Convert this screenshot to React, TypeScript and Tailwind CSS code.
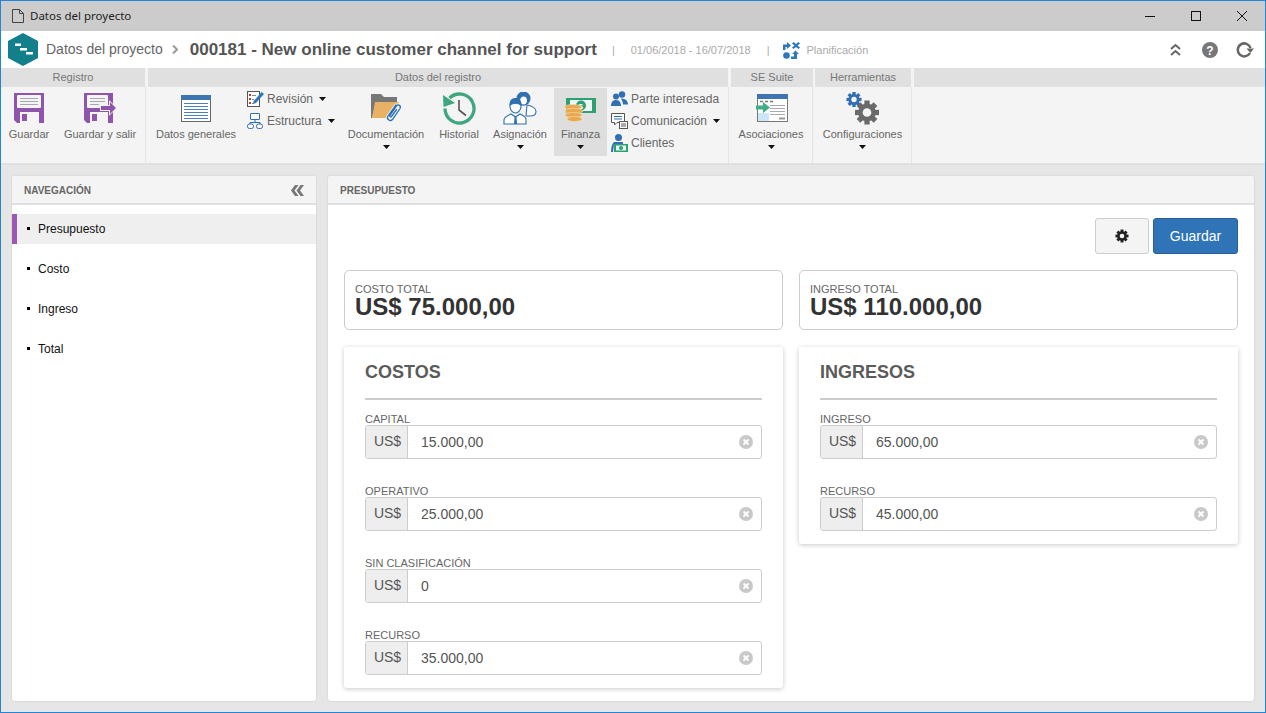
import React from "react";

const Caret = ({ className = "" }: { className?: string }) => (
  <svg width="7" height="4" viewBox="0 0 7 4" className={className}><path d="M0 0h7L3.5 4z" fill="#111" /></svg>
);

const SaveIcon = () => (
  <svg width="30" height="30" viewBox="0 0 30 30">
    <path d="M0 0h30v30H3l-3-3z" fill="#8e55aa" />
    <rect x="3" y="2" width="24" height="13" rx="1" fill="#f4f4f4" />
    <path d="M6 5.500h18M6 8.500h18M6 11.500h18" stroke="#a9a9a9" strokeWidth="1" />
    <rect x="6" y="19" width="19" height="11" fill="#f4f4f4" />
    <rect x="8" y="21" width="5" height="7" fill="#8e55aa" />
  </svg>
);
const SaveExitIcon = () => (
  <svg width="33" height="30" viewBox="0 0 33 30">
    <path d="M0 0h29v30H3l-3-3z" fill="#8e55aa" />
    <rect x="3" y="2" width="21" height="13" rx="1" fill="#f4f4f4" />
    <path d="M6 5.500h15M6 8.500h15M6 11.500h9" stroke="#a9a9a9" strokeWidth="1" />
    <rect x="6" y="19" width="18" height="11" fill="#f4f4f4" />
    <rect x="8" y="21" width="5" height="7" fill="#8e55aa" />
    <path d="M16 12h9V7l8 8-8 8v-5h-9z" fill="#f4f4f4" />
    <path d="M17 13h9V9l6 6-6 6v-4h-9z" fill="#8e55aa" />
  </svg>
);
const WindowIcon = () => (
  <svg width="30" height="27" viewBox="0 0 30 27">
    <rect x="0.500" y="0.500" width="29" height="26" fill="#fff" stroke="#666" />
    <rect x="0" y="0" width="30" height="5" fill="#3d75b0" />
    <path d="M3 8.500h24M3 11.500h24M3 14.500h24M3 17.500h24M3 20.500h24M3 23.500h24" stroke="#4a7fb8" strokeWidth="1" />
  </svg>
);
const ReviewIcon = () => (
  <svg width="17" height="16" viewBox="0 0 17 16">
    <rect x="0.500" y="0.500" width="12" height="15" fill="#fff" stroke="#555" />
    <path d="M2 3h2v2H2zM2 7h2v2H2zM2 11h2v2H2z" fill="#c0392b" />
    <path d="M5 4.500h4M5 8.500h2M5 12.500h2" stroke="#888" />
    <path d="M14.500 1l2.500 2-8 9-3 1 .7-3z" fill="#2f77bd" />
  </svg>
);
const TreeIcon = () => (
  <svg width="16" height="16" viewBox="0 0 16 16" fill="#fff" stroke="#2f6fb2">
    <rect x="3.500" y="0.500" width="9" height="6" rx="0.500" />
    <path d="M8 6.500v3M3 11V9.500h10V11" fill="none" />
    <rect x="0.500" y="11" width="6" height="4.500" rx="2" />
    <rect x="9.500" y="11" width="6" height="4.500" rx="2" />
  </svg>
);
const FolderIcon = () => (
  <svg width="31" height="30" viewBox="0 0 31 30">
    <path d="M0 1h10l3 3h13v6H5L1 25H0z" fill="#777" />
    <path d="M4 9h24l-6 16H1z" fill="#e9b163" />
    <path d="M25 12l-8 11c-2 3 2 6 4.500 3.500l7.500-11c1.500-2.500-2-5-3.500-2.500l-6.500 9.500c-.7 1 .7 2 1.500 1l5-7" fill="none" stroke="#f4f4f4" strokeWidth="3" strokeLinecap="round" />
    <path d="M25 12l-8 11c-2 3 2 6 4.500 3.500l7.500-11c1.500-2.500-2-5-3.500-2.500l-6.500 9.500c-.7 1 .7 2 1.500 1l5-7" fill="none" stroke="#2a70b5" strokeWidth="1.300" strokeLinecap="round" />
  </svg>
);
const ClockIcon = () => (
  <svg width="33" height="33" viewBox="0 0 33 33">
    <path d="M6.500 6A14.500 14.500 0 1 1 2 16.500" fill="none" stroke="#3fa680" strokeWidth="3.300" />
    <path d="M0 3l12 8-11.500 4z" fill="#3fa680" />
    <path d="M16 8v10l7 5.500" fill="none" stroke="#555" strokeWidth="1.600" />
  </svg>
);
const PeopleIcon = () => (
  <svg width="34" height="33" viewBox="0 0 34 33" fill="#fff" stroke="#2f6fb2" strokeWidth="1.100">
    <path d="M24 13c4 .5 9 3 9 6.500s-3 4.500-6 4.500h-4z" />
    <ellipse cx="20.500" cy="6.500" rx="6.500" ry="6.500" fill="#2f6fb2" />
    <ellipse cx="20.500" cy="8.500" rx="4" ry="4.500" />
    <path d="M1 32v-4c0-3 3-4 7-6l4.500 3 4.500-3c4 2 6 3 6 6v4z" />
    <ellipse cx="12.500" cy="14" rx="5.500" ry="7" />
    <path d="M7 13c0-5 3-6.500 5.500-6.500S18 8 18 13c-3-2-8-2-11 0z" fill="#2f6fb2" />
    <path d="M11.500 25h2l.5 7h-3z" fill="#2f6fb2" stroke="none" />
  </svg>
);
const MoneyIcon = () => (
  <svg width="33" height="26" viewBox="0 0 33 26">
    <rect x="2" y="1" width="30" height="15" fill="#2fa073" />
    <rect x="6" y="3" width="22" height="11" fill="#eef7f3" />
    <circle cx="17" cy="8.500" r="5" fill="#2fa073" />
    <text x="14.500" y="11.500" fontSize="8" fill="#fff" fontFamily="Liberation Sans, sans-serif" fontWeight="700">$</text>
    <ellipse cx="9" cy="10" rx="8.500" ry="2.500" fill="#e9a94f" stroke="#f8dcae" strokeWidth="0.600" />
    <ellipse cx="10" cy="14" rx="9" ry="2.500" fill="#e9a94f" stroke="#f8dcae" strokeWidth="0.600" />
    <ellipse cx="9.500" cy="18" rx="8.500" ry="2.500" fill="#e9a94f" stroke="#f8dcae" strokeWidth="0.600" />
    <ellipse cx="10.500" cy="22" rx="7.500" ry="2.500" fill="#e9a94f" stroke="#f8dcae" strokeWidth="0.600" />
  </svg>
);
const GroupIcon = () => (
  <svg width="17" height="16" viewBox="0 0 17 16" fill="#2f6fb2">
    <circle cx="5" cy="5.500" r="3" />
    <circle cx="11" cy="3.500" r="3.200" />
    <path d="M0 15c0-4 2-6 5-6s5 2 5 6z" />
    <path d="M10 7.500c4 0 7 2 7 6h-5c0-2-1-4-2-6z" />
  </svg>
);
const CommIcon = () => (
  <svg width="17" height="16" viewBox="0 0 17 16">
    <path d="M.5.500h13v9H6L3.500 12V9.500h-3z" fill="#fff" stroke="#555" />
    <path d="M3 3.500h8M3 6h8" stroke="#2f6fb2" />
    <rect x="8.500" y="8.500" width="8" height="7" fill="#fff" stroke="#555" />
    <path d="M10 11h5M10 13h5" stroke="#555" />
  </svg>
);
const ClientIcon = () => (
  <svg width="17" height="18" viewBox="0 0 17 18">
    <circle cx="7.500" cy="3.500" r="3.500" fill="#2f6fb2" />
    <path d="M3 8h9v2H3L2 18H0c0-5 1-8 3-10z" fill="#2f6fb2" />
    <rect x="3" y="10" width="14" height="8" fill="#2fa073" />
    <rect x="5" y="11.500" width="10" height="5" fill="#e8f4ef" />
    <circle cx="10" cy="14" r="2" fill="#2fa073" />
  </svg>
);
const AssocIcon = () => (
  <svg width="33" height="28" viewBox="0 0 33 28">
    <rect x="2.500" y="0.500" width="30" height="27" fill="#fff" stroke="#777" />
    <rect x="2" y="0" width="31" height="5" fill="#3d75b0" />
    <path d="M5 7.500h3M10 7.500h3M15 7.500h3" stroke="#777" strokeWidth="1.500" />
    <rect x="3" y="19" width="11" height="8" fill="#cbe6f5" />
    <path d="M15 11.500h15M15 14.500h15M15 17.500h15M15 20.500h15" stroke="#aaa" />
    <path d="M24 24.500h6" stroke="#999" strokeWidth="2" />
    <path d="M1 11.500h7V8l7 5.500-7 5.500v-3.500H1z" fill="#3fae84" />
  </svg>
);
const Cog = ({ cx, cy, r, fill, hole }: { cx: number; cy: number; r: number; fill: string; hole: string }) => (
  <g>
    {[0, 45, 90, 135].map((a) => (
      <rect key={a} x={cx - r * 0.22} y={cy - r} width={r * 0.44} height={r * 2} fill={fill} transform={`rotate(${a} ${cx} ${cy})`} />
    ))}
    <circle cx={cx} cy={cy} r={r * 0.74} fill={fill} />
    <circle cx={cx} cy={cy} r={r * 0.36} fill={hole} />
  </g>
);
const GearsIcon = () => (
  <svg width="34" height="33" viewBox="0 0 34 33">
    <Cog cx={8} cy={7.500} r={7.500} fill="#2f6fb2" hole="#f4f4f4" />
    <Cog cx={21} cy={20.500} r={12} fill="#6a6a6a" hole="#f4f4f4" />
  </svg>
);

const PlanIcon = () => (
  <svg width="17" height="17" viewBox="0 0 17 17" fill="#2f77bd">
    <path d="M0 2.500h4V0l4 3.500L4 7V5H2.500v3H0z" />
    <path d="M10.500 0l2.500 2 2.500-2L17 1.500l-2.500 2 2.500 2L15.500 7 13 5l-2.500 2L9 5.500l2.500-2L9 1.500z" />
    <circle cx="3.500" cy="13.500" r="3.300" />
    <path d="M8 14.500h3V12H9l3.500-3.500L16 12h-2v5H8z" />
  </svg>
);

const RibbonBtn = ({ w, label, icon, caret, active, top = "pt-[6px]", extra = "" }: { w: string; label: string; icon: React.ReactNode; caret?: boolean; active?: boolean; top?: string; extra?: string }) => (
  <div className={`${w} ${extra} flex flex-col items-center shrink-0 ${active ? "bg-[#dedede] h-[68px] mt-px" : ""}`}>
    <div className={`${active ? "h-[39px]" : "h-[40px]"} flex items-start justify-center ${top}`}>{icon}</div>
    <span className="text-[11px] leading-[14px] text-[#666] whitespace-nowrap">{label}</span>
    {caret && <Caret className="mt-[4px]" />}
  </div>
);

const SmallBtn = ({ icon, label, caret }: { icon: React.ReactNode; label: string; caret?: boolean }) => (
  <div className="h-[22px] flex items-center">
    <div className="w-[20px] flex justify-start">{icon}</div>
    <span className="text-[12px] text-[#666] whitespace-nowrap">{label}</span>
    {caret && <Caret className="ml-[6px]" />}
  </div>
);

const Field = ({ label, value, last }: { label: string; value: string; last?: boolean }) => (
  <div className={last ? "" : "mb-[26px]"}>
    <div className="text-[11px] leading-[12px] text-[#666] h-[12px]">{label}</div>
    <div className="flex h-[34px] border border-[#ccc] rounded-[3px] bg-white">
      <div className="w-[42px] shrink-0 bg-[#eee] border-r border-[#ccc] rounded-l-[3px] flex items-center justify-center text-[14px] text-[#555] pb-[2px] pl-[2px]">US$</div>
      <div className="flex-1 pl-[13px] flex items-center text-[14px] text-[#555]">{value}</div>
      <div className="pr-[8px] flex items-center">
        <svg width="14" height="14" viewBox="0 0 14 14">
          <circle cx="7" cy="7" r="7" fill="#c9c9c9" />
          <path d="M4.500 4.500l5 5M9.500 4.500l-5 5" stroke="#fff" strokeWidth="2" />
        </svg>
      </div>
    </div>
  </div>
);

const Section = ({ title, children }: { title: string; children: React.ReactNode }) => (
  <div className="bg-white rounded-[3px] shadow-[0_1px_5px_rgba(0,0,0,0.22)] px-[21px] pb-[13px] pt-[14px]">
    <div className="text-[18px] leading-[22px] font-bold text-[#5b5b5b] pb-[15px] border-b-2 border-[#ccc] mb-[13px]">{title}</div>
    {children}
  </div>
);

const Total = ({ label, value }: { label: string; value: string }) => (
  <div className="h-[60px] border border-[#ccc] rounded-[5px] bg-white px-[10px] pt-[12px]">
    <div className="text-[11px] leading-[12px] text-[#666]">{label}</div>
    <div className="text-[24px] leading-[24px] font-bold text-[#333]">{value}</div>
  </div>
);

const NavItem = ({ label, active }: { label: string; active?: boolean }) => (
  <div className={`h-[30px] mb-[10px] flex items-center text-[12px] text-[#111] ${active ? "bg-[#efefef] border-l-[5px] border-[#9b59b6] pl-[10px]" : "pl-[15px]"}`}>
    <span className="w-[3px] h-[3px] bg-black mr-[8px] mb-[2px]" />
    {label}
  </div>
);

const RibbonTab = ({ w, label }: { w: string; label: string }) => (
  <div className={`${w} shrink-0 bg-[#e0e0e0] h-[19px] flex items-center justify-center text-[11px] text-[#777]`}>{label}</div>
);

export default function App() {
  return (
    <div className="h-[713px] w-[1266px] overflow-hidden flex flex-col bg-[#e6e6e6] border border-[#1f86d9] font-['Liberation_Sans',Arial,sans-serif]">
      {/* title bar */}
      <div className="h-[30px] shrink-0 bg-[#cccccc] flex items-center">
        <svg width="12" height="14" viewBox="0 0 12 14" className="ml-[11px] mr-[6px]" fill="none" stroke="#444">
          <path d="M.5.500h7l4 4v9H.5zM7.500.500v4h4" />
        </svg>
        <span className="text-[11.5px] text-[#222] font-['Noto_Sans',sans-serif]">Datos del proyecto</span>
        <div className="ml-auto flex items-center h-full">
          <div className="w-[46px] flex justify-center"><svg width="10" height="10" viewBox="0 0 10 10"><path d="M0 5.500h10" stroke="#111" /></svg></div>
          <div className="w-[46px] flex justify-center"><svg width="10" height="10" viewBox="0 0 10 10"><rect x=".5" y=".5" width="9" height="9" fill="none" stroke="#111" /></svg></div>
          <div className="w-[46px] flex justify-center"><svg width="10" height="10" viewBox="0 0 10 10"><path d="M0 0l10 10M10 0L0 10" stroke="#111" /></svg></div>
        </div>
      </div>
      {/* header */}
      <div className="h-[37px] shrink-0 bg-white flex items-center">
        <svg width="30" height="33" viewBox="0 0 30 33" className="ml-[7px]">
          <path d="M15 0l15 8v17l-15 8-15-8V8z" fill="#137f8b" />
          <path d="M7 10.500h6v2.500H7zM12 15h7v2.500h-7zM18 19h7v2.500h-7z" fill="#fff" />
        </svg>
        <span className="ml-[8px] text-[14px] text-[#666]">Datos del proyecto</span>
        <svg width="6" height="9" viewBox="0 0 6 9" className="ml-[9px]" fill="none" stroke="#999" strokeWidth="2"><path d="M1 0.500l4 4-4 4" /></svg>
        <span className="ml-[12px] text-[17px] font-bold text-[#555]">000181 - New online customer channel for support</span>
        <span className="ml-[15px] pt-[2px] text-[11px] text-[#aaa]">|</span>
        <span className="ml-[16px] pt-[2px] text-[11px] text-[#aaa]">01/06/2018 - 16/07/2018</span>
        <span className="ml-[16px] pt-[2px] text-[11px] text-[#aaa]">|</span>
        <span className="ml-[13px] pt-[2px]"><PlanIcon /></span>
        <span className="ml-[7px] pt-[2px] text-[11px] text-[#aaa]">Planificación</span>
        <div className="ml-auto flex items-center pr-[11px]">
          <svg width="11" height="13" viewBox="0 0 11 13" fill="none" stroke="#666" strokeWidth="2"><path d="M1 6l4.500-4L10 6M1 12l4.500-4 4.500 4" /></svg>
          <svg width="16" height="16" viewBox="0 0 16 16" className="ml-[21px]"><circle cx="8" cy="8" r="8" fill="#777" /><text x="8" y="12.500" textAnchor="middle" fontSize="12" fontWeight="700" fill="#fff" fontFamily="Liberation Sans, sans-serif">?</text></svg>
          <svg width="18" height="16" viewBox="0 0 18 16" fill="none" stroke="#666" strokeWidth="2.500" className="ml-[18px]"><path d="M14 11a6.500 6.500 0 1 1 .5-5" /><path d="M10.500 6.500h7.500l-3.700 4.500z" fill="#666" stroke="none" /></svg>
        </div>
      </div>
      {/* ribbon tabs */}
      <div className="h-[19px] shrink-0 flex bg-[#f4f4f4]">
        <RibbonTab w="w-[144px]" label="Registro" />
        <div className="w-[3px]" />
        <RibbonTab w="w-[580px]" label="Datos del registro" />
        <div className="w-[3px]" />
        <RibbonTab w="w-[82px]" label="SE Suite" />
        <div className="w-[2px]" />
        <RibbonTab w="w-[96px]" label="Herramientas" />
        <div className="w-[3px]" />
        <div className="flex-1 bg-[#e0e0e0]" />
      </div>
      {/* ribbon body */}
      <div className="h-[78px] shrink-0 flex bg-[#f4f4f4] border-b-2 border-[#e0e0e0]">
        <div className="w-[145px] flex border-r border-[#e4e4e4]">
          <RibbonBtn w="w-[56px]" label="Guardar" icon={<SaveIcon />} />
          <RibbonBtn w="w-[86px]" label="Guardar y salir" icon={<SaveExitIcon />} />
        </div>
        <div className="w-[583px] flex border-r border-[#e4e4e4]">
          <RibbonBtn w="w-[100px]" label="Datos generales" icon={<WindowIcon />} top="pt-[8px]" />
          <div className="w-[92px] shrink-0 pt-[1px] pl-[1px]">
            <SmallBtn icon={<ReviewIcon />} label="Revisión" caret />
            <SmallBtn icon={<TreeIcon />} label="Estructura" caret />
          </div>
          <RibbonBtn w="w-[96px]" label="Documentación" icon={<FolderIcon />} caret />
          <RibbonBtn w="w-[50px]" label="Historial" icon={<ClockIcon />} top="pt-[5px]" />
          <RibbonBtn w="w-[70px]" extra="pl-[2px]" label="Asignación" icon={<PeopleIcon />} top="pt-[5px]" caret />
          <RibbonBtn w="w-[53px]" label="Finanza" icon={<MoneyIcon />} top="pt-[9px]" caret active />
          <div className="flex-1 pl-[4px] pt-[1px]">
            <SmallBtn icon={<GroupIcon />} label="Parte interesada" />
            <SmallBtn icon={<CommIcon />} label="Comunicación" caret />
            <SmallBtn icon={<ClientIcon />} label="Clientes" />
          </div>
        </div>
        <div className="w-[84px] flex border-r border-[#e4e4e4]">
          <RibbonBtn w="w-[83px]" extra="pl-[1px]" label="Asociaciones" icon={<AssocIcon />} top="pt-[7px]" caret />
        </div>
        <div className="w-[99px] flex border-r border-[#e4e4e4]">
          <RibbonBtn w="w-[98px]" extra="pl-[1px]" label="Configuraciones" icon={<GearsIcon />} top="pt-[5px]" caret />
        </div>
      </div>
      {/* main */}
      <div className="flex-1 min-h-0 flex gap-[12px] pl-[11px] pr-[11px] pt-[11px] pb-[11px]">
        <aside className="w-[304px] shrink-0 bg-white rounded-[3px] shadow-[0_0_2px_rgba(0,0,0,0.15)]">
          <div className="h-[29px] bg-[#f4f4f4] border-b-2 border-[#e0e0e0] rounded-t-[3px] flex items-center justify-between pl-[12px] pr-[12px] pt-[2px]">
            <span className="text-[10px] font-bold text-[#666]">NAVEGACIÓN</span>
            <svg width="13" height="11" viewBox="0 0 13 11" fill="#777"><path d="M4 0h3.500L3.500 5.500 7.500 11H4L0 5.500zM9.500 0H13L9 5.500l4 5.500H9.500l-4-5.500z" /></svg>
          </div>
          <div className="pt-[9px]">
            <NavItem label="Presupuesto" active />
            <NavItem label="Costo" />
            <NavItem label="Ingreso" />
            <NavItem label="Total" />
          </div>
        </aside>
        <main className="flex-1 min-w-0 bg-white rounded-[3px] shadow-[0_0_2px_rgba(0,0,0,0.15)]">
          <div className="h-[29px] bg-[#f4f4f4] border-b-2 border-[#e0e0e0] rounded-t-[3px] flex items-center pl-[12px] pt-[2px]">
            <span className="text-[10px] font-bold text-[#666]">PRESUPUESTO</span>
          </div>
          <div className="px-[16px] pt-[13px]">
            <div className="flex justify-end gap-[4px] mb-[16px]">
              <div className="w-[54px] h-[36px] bg-[#f4f4f4] border border-[#ccc] rounded-[3px] flex items-center justify-center">
                <svg width="14" height="14" viewBox="0 0 14 14"><Cog cx={7} cy={7} r={6.500} fill="#222" hole="#f4f4f4" /></svg>
              </div>
              <div className="w-[85px] h-[36px] bg-[#2e74b7] border border-[#285f94] rounded-[3px] flex items-center justify-center text-[14px] text-white">Guardar</div>
            </div>
            <div className="grid grid-cols-2 gap-x-[16px] gap-y-[17px] items-start">
              <Total label="COSTO TOTAL" value="US$ 75.000,00" />
              <Total label="INGRESO TOTAL" value="US$ 110.000,00" />
              <Section title="COSTOS">
                <Field label="CAPITAL" value="15.000,00" />
                <Field label="OPERATIVO" value="25.000,00" />
                <Field label="SIN CLASIFICACIÓN" value="0" />
                <Field label="RECURSO" value="35.000,00" last />
              </Section>
              <Section title="INGRESOS">
                <Field label="INGRESO" value="65.000,00" />
                <Field label="RECURSO" value="45.000,00" last />
              </Section>
            </div>
          </div>
        </main>
      </div>
    </div>
  );
}
